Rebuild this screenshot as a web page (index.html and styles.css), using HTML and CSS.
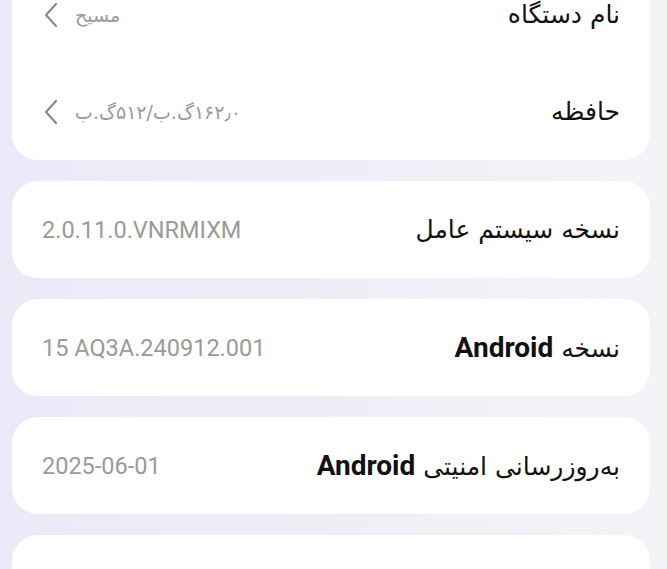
FILE: index.html
```html
<!DOCTYPE html>
<html lang="fa" dir="rtl">
    <head>
        <title>درباره تلفن</title>
        <meta name="viewport" content="width=device-width, initial-scale=1">
        <link rel="stylesheet" href="styles.css">
    </head>
    <body>
        <div id="main">
            <div class="card" id="first">
                <div class="row">
                    <span class="label">نام دستگاه</span>
                    <span class="value">
                        <span class="fa-value">مسیح</span>
                        <svg class="chevron" width="16" height="26" viewBox="0 0 16 26"><path d="M13 2 L3 13 L13 24" /></svg>
                    </span>
                </div>
                <div class="row">
                    <span class="label">حافظه</span>
                    <span class="value">
                        <span class="fa-value">۱۶۲٫۰گ.ب/۵۱۲گ.ب</span>
                        <svg class="chevron" width="16" height="26" viewBox="0 0 16 26"><path d="M13 2 L3 13 L13 24" /></svg>
                    </span>
                </div>
            </div>
            <div class="card">
                <div class="row">
                    <span class="label">نسخه سیستم عامل</span>
                    <span class="value" dir="ltr">2.0.11.0.VNRMIXM</span>
                </div>
            </div>
            <div class="card">
                <div class="row">
                    <span class="label">نسخه <b>Android</b></span>
                    <span class="value" dir="ltr">15 AQ3A.240912.001</span>
                </div>
            </div>
            <div class="card">
                <div class="row">
                    <span class="label">به‌روزرسانی امنیتی <b>Android</b></span>
                    <span class="value" dir="ltr">2025-06-01</span>
                </div>
            </div>
            <div class="card">
                <div class="row"></div>
            </div>
        </div>
    </body>
</html>
```

FILE: styles.css
```css
html, body{
    margin: 0;
    height: 100%;
    overflow: hidden;
}
body{
    background: linear-gradient(90deg, #eae9f8 0%, #efeef7 50%, #f4f3f6 100%);
    font-family: Roboto, "DejaVu Sans", sans-serif;
}
#main{
    display: flex;
    flex-direction: column;
    gap: 21px;
    margin-top: -34px;
    padding: 0 17px 0 12px;
}
.card{
    background-color: #ffffff;
    border-radius: 26px;
}
.row{
    height: 97px;
    display: flex;
    align-items: center;
    justify-content: space-between;
    padding: 0 30px 0 30px;
}
.label{
    font-family: "DejaVu Sans", sans-serif;
    font-size: 25px;
    color: #111111;
}
.label b{
    font-family: Roboto, sans-serif;
    font-size: 28px;
    font-weight: 700;
}
.value{
    display: flex;
    align-items: center;
    gap: 16px;
    font-size: 23.5px;
    color: #9a9a9a;
}
.fa-value{
    font-family: "DejaVu Sans", sans-serif;
    font-size: 19px;
    color: #9a9a9a;
}
.chevron{
    margin-left: 1px;
}
.chevron path{
    fill: none;
    stroke: #8a8a8a;
    stroke-width: 2.2;
    stroke-linecap: round;
    stroke-linejoin: round;
}
```
